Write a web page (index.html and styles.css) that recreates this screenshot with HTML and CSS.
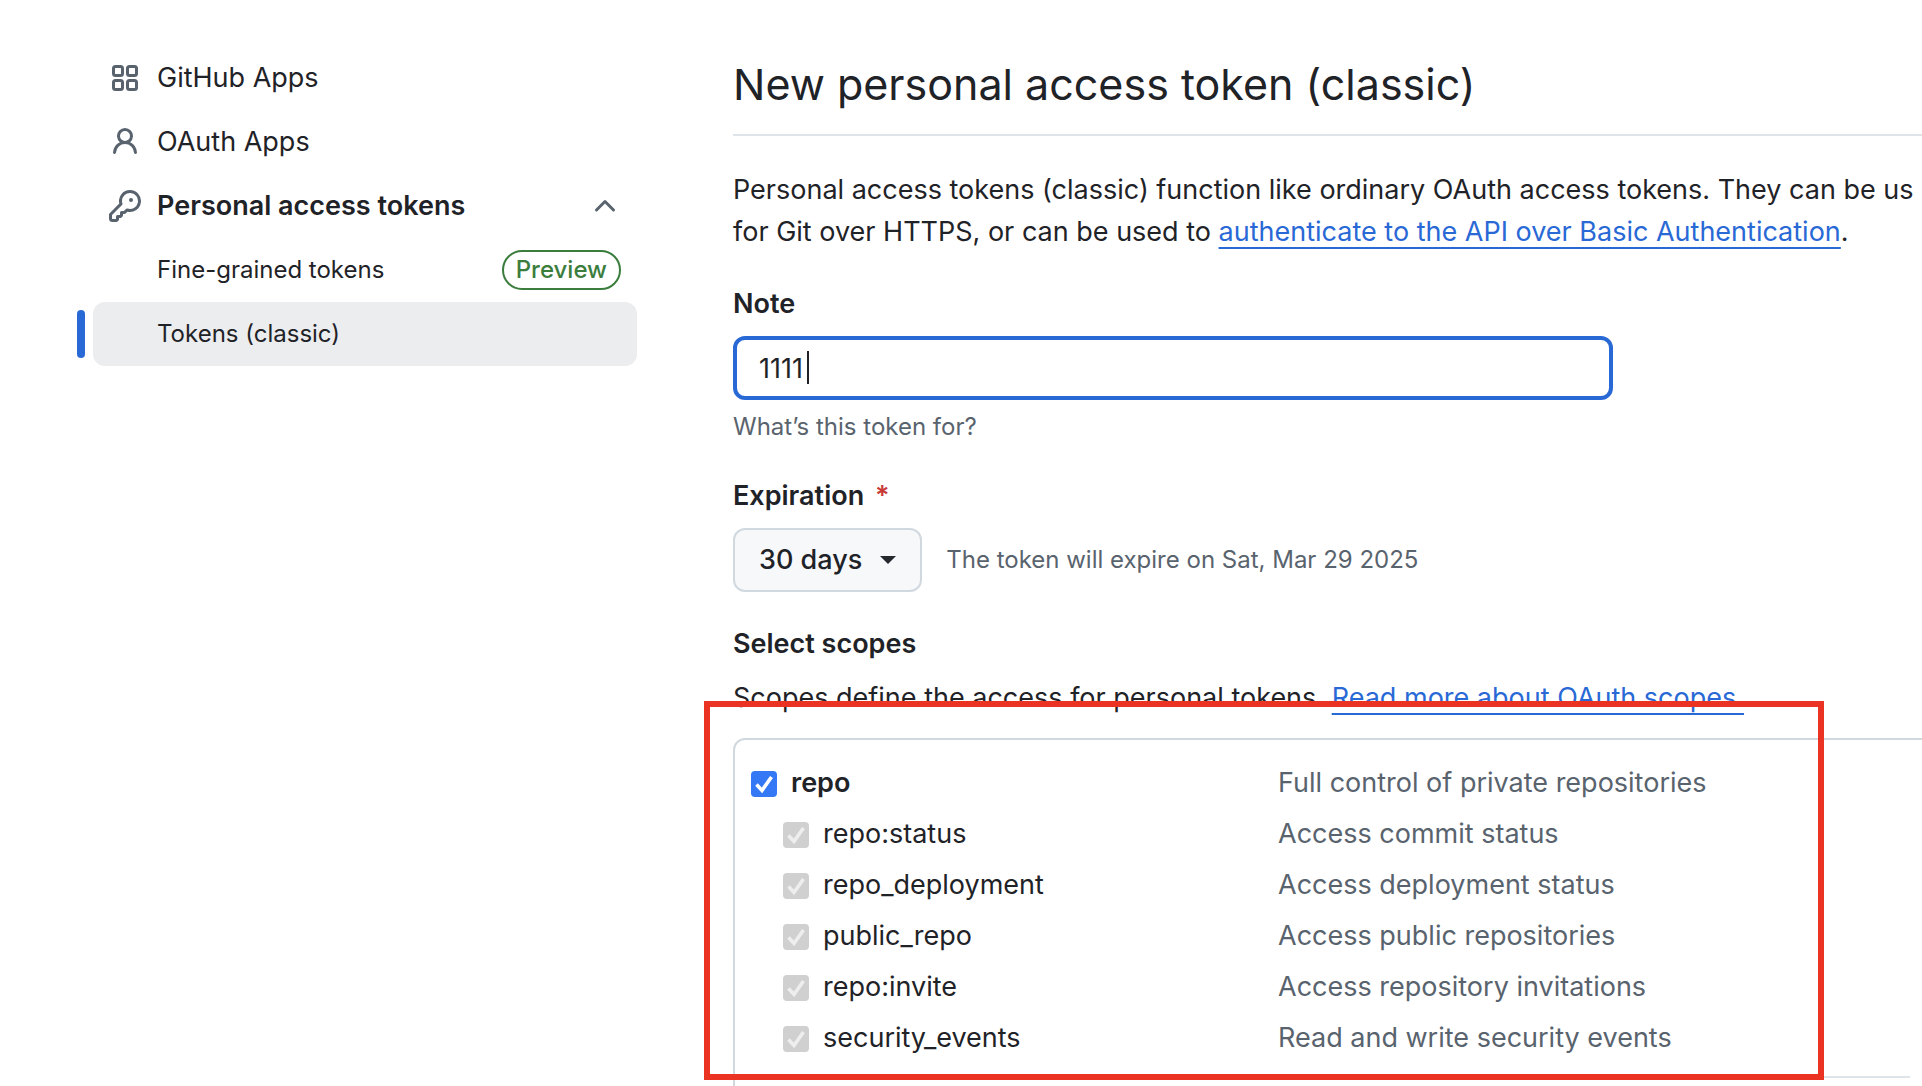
FILE: index.html
```html
<!DOCTYPE html>
<html lang="en">
	<head>
		<meta charset="utf-8">
		<title>New personal access token (classic)</title>
		<link rel="stylesheet" href="styles.css">
	</head>
	<body>
		<div class="page">
			<nav class="sidebar">
				<ul class="navList">
					<li>
						<a href="#" class="navItem">
							<svg class="icon" viewBox="0 0 16 16">
								<g fill="none" stroke="currentColor" stroke-width="1.5">
									<rect x="2.25" y="2.25" width="4.5" height="4.5" rx="1"/>
									<rect x="9.25" y="2.25" width="4.5" height="4.5" rx="1"/>
									<rect x="2.25" y="9.25" width="4.5" height="4.5" rx="1"/>
									<rect x="9.25" y="9.25" width="4.5" height="4.5" rx="1"/>
								</g>
							</svg>
							<span>GitHub Apps</span>
						</a>
					</li>
					<li>
						<a href="#" class="navItem">
							<svg class="icon" viewBox="0 0 16 16"><path d="M10.561 8.073a6.005 6.005 0 0 1 3.432 5.142.75.75 0 1 1-1.498.07 4.5 4.5 0 0 0-8.99 0 .75.75 0 0 1-1.498-.07 6.004 6.004 0 0 1 3.431-5.142 3.999 3.999 0 1 1 5.123 0ZM10.5 5a2.5 2.5 0 1 0-5 0 2.5 2.5 0 0 0 5 0Z"/></svg>
							<span>OAuth Apps</span>
						</a>
					</li>
					<li>
						<button type="button" class="navItem parent" aria-expanded="true">
							<svg class="icon" viewBox="0 0 16 16"><path d="M10.5 0a5.499 5.499 0 1 1-1.288 10.848l-.932.932a.749.749 0 0 1-.53.22H7v.75a.749.749 0 0 1-.22.53l-.5.5a.749.749 0 0 1-.53.22H5v.75a.749.749 0 0 1-.22.53l-.5.5a.749.749 0 0 1-.53.22h-2A1.75 1.75 0 0 1 0 14.25v-2c0-.199.079-.389.22-.53l4.932-4.932A5.5 5.5 0 0 1 10.5 0Zm-4 5.5c-.001.431.069.86.205 1.269a.75.75 0 0 1-.181.768L1.5 12.56v1.69c0 .138.112.25.25.25h1.69l.06-.06v-1.19a.75.75 0 0 1 .75-.75h1.19l.06-.06v-1.19a.75.75 0 0 1 .75-.75h1.19l1.023-1.025a.75.75 0 0 1 .768-.18A4 4 0 1 0 6.5 5.5ZM11 6a1 1 0 1 1 0-2 1 1 0 0 1 0 2Z"/></svg>
							<span>Personal access tokens</span>
							<svg class="icon chevron" viewBox="0 0 16 16"><path d="M3.22 10.53a.749.749 0 0 1 0-1.06l4.25-4.25a.749.749 0 0 1 1.06 0l4.25 4.25a.749.749 0 1 1-1.06 1.06L8 6.811 4.28 10.53a.749.749 0 0 1-1.06 0Z"/></svg>
						</button>
						<ul class="subList">
							<li>
								<a href="#" class="navItem subItem">
									<span>Fine-grained tokens</span>
									<span class="badge">Preview</span>
								</a>
							</li>
							<li>
								<a href="#" class="navItem subItem current" aria-current="page">
									<span>Tokens (classic)</span>
								</a>
							</li>
						</ul>
					</li>
				</ul>
			</nav>

			<main class="content">
				<h1>New personal access token (classic)</h1>
				<p class="intro">Personal access tokens (classic) function like ordinary OAuth access tokens. They can be us<br>
				for Git over HTTPS, or can be used to <a href="#">authenticate to the API over Basic Authentication</a>.</p>

				<form>
					<div class="field">
						<label for="note">Note</label>
						<div class="inputWrap">
							<input type="text" id="note" class="textInput" value="1111">
							<span class="cursor"></span>
						</div>
						<p class="hint">What’s this token for?</p>
					</div>

					<div class="field">
						<label for="expiration">Expiration <span class="required">*</span></label>
						<div class="expiration">
							<button type="button" id="expiration" class="dropdown">30 days<span class="caret"></span></button>
							<span class="hint">The token will expire on Sat, Mar 29 2025</span>
						</div>
					</div>

					<h2>Select scopes</h2>
					<p class="scopesText">Scopes define the access for personal tokens. <a href="#">Read more about OAuth scopes.</a></p>

					<div class="scopesWrap">
						<div class="scopes">
							<ul class="scopeGroup">
								<li class="scope top">
									<label><input type="checkbox" checked>repo</label>
									<span>Full control of private repositories</span>
								</li>
								<li class="scope">
									<label><input type="checkbox" checked disabled>repo:status</label>
									<span>Access commit status</span>
								</li>
								<li class="scope">
									<label><input type="checkbox" checked disabled>repo_deployment</label>
									<span>Access deployment status</span>
								</li>
								<li class="scope">
									<label><input type="checkbox" checked disabled>public_repo</label>
									<span>Access public repositories</span>
								</li>
								<li class="scope">
									<label><input type="checkbox" checked disabled>repo:invite</label>
									<span>Access repository invitations</span>
								</li>
								<li class="scope">
									<label><input type="checkbox" checked disabled>security_events</label>
									<span>Read and write security events</span>
								</li>
							</ul>
						</div>
						<div class="highlight"></div>
					</div>
				</form>
			</main>
		</div>
	</body>
</html>
```
FILE: styles.css
```css
*{
	box-sizing: border-box;
	padding: 0;
	margin: 0;
}
ul,li{
	list-style: none;
}
body{
	overflow: hidden;
	font-family: Inter, "Liberation Sans", sans-serif;
	font-size: 27px;
	line-height: 42px;
	color: #1f2328;
	background-color: #fff;
}
button,input{
	font: inherit;
	color: inherit;
}
a{
	color: #2969d6;
	text-decoration: none;
}
.page{
	display: flex;
	gap: 96px;
	/* the content runs on past the right edge of the window */
	width: calc(100% + 60px);
	padding: 46px 0 0 93px;
}

/* sidebar */
.sidebar{
	flex: none;
	width: 544px;
}
.navItem{
	position: relative;
	display: flex;
	align-items: center;
	gap: 16px;
	width: 100%;
	height: 64px;
	padding: 0 16px;
	border: 0;
	border-radius: 12px;
	background-color: transparent;
	color: #1f2328;
	text-align: left;
}
.parent{
	font-weight: 600;
}
.icon{
	flex: none;
	width: 32px;
	height: 32px;
	fill: #59636e;
	color: #59636e;
}
.chevron{
	margin-left: auto;
}
.subItem{
	justify-content: space-between;
	padding-left: 64px;
	font-size: 24px;
}
.badge{
	height: 40px;
	padding: 0 12px;
	border: 2px solid #3a7d3c;
	border-radius: 20px;
	font-weight: 500;
	line-height: 36px;
	color: #3a7d3c;
}
.current{
	background-color: #ecedef;
}
.current::before{
	content: "";
	position: absolute;
	left: -16px;
	top: 8px;
	width: 8px;
	height: 48px;
	border-radius: 6px;
	background-color: #2969d6;
}

/* main */
.content{
	flex: 1;
	min-width: 0;
}
h1{
	height: 90px;
	padding-top: 2px;
	border-bottom: 2px solid #dfe4e9;
	font-size: 43px;
	font-weight: 400;
	line-height: 72px;
}
.intro{
	margin: 33px 0 30px;
	white-space: nowrap;
}
.intro a,.scopesText a{
	text-decoration: underline;
	text-decoration-thickness: 2px;
	text-underline-offset: 6px;
}
.field{
	margin-bottom: 27px;
}
.field label{
	display: block;
	margin-bottom: 11px;
	font-weight: 600;
}
h2{
	margin: 31px 0 12px;
	font-size: 27px;
	font-weight: 600;
}
.required{
	margin-left: 4px;
	color: #c93a37;
}
.inputWrap{
	position: relative;
	width: 880px;
	max-width: 100%;
}
.textInput{
	display: block;
	width: 100%;
	height: 64px;
	padding: 0 22px;
	border: 4px solid #2969d6;
	border-radius: 12px;
	outline: none;
	background-color: #fff;
}
/* text cursor after the value */
.cursor{
	position: absolute;
	top: 15px;
	left: 74px;
	width: 2px;
	height: 33px;
	background-color: #1f2328;
}
.hint{
	font-size: 24px;
	color: #59636e;
}
.field p.hint{
	margin-top: 6px;
}
.expiration{
	display: flex;
	align-items: center;
	gap: 24px;
}
.dropdown{
	display: flex;
	align-items: center;
	gap: 18px;
	height: 64px;
	padding: 0 24px;
	border: 2px solid #d1d9e0;
	border-radius: 12px;
	background-color: #f6f8fa;
	font-weight: 500;
}
.caret{
	border: 8px solid transparent;
	border-top-color: #25292e;
	border-bottom: 0;
}
.scopesText{
	margin-bottom: 19px;
}

/* scopes */
.scopesWrap{
	position: relative;
}
.scopes{
	height: 400px;
	padding: 17px 16px;
	border: 2px solid #d1d9e0;
	border-radius: 12px;
}
.scopeGroup{
	margin-right: 54px;
	padding-bottom: 13px;
	border-bottom: 2px solid #dfe4e9;
}
.scope{
	display: grid;
	grid-template-columns: 527px 1fr;
	align-items: center;
	height: 51px;
	color: #59636e;
}
.scope label{
	display: flex;
	align-items: center;
	gap: 14px;
	padding-left: 32px;
	color: #1f2328;
}
.scope.top label{
	padding-left: 0;
	font-weight: 600;
}
.scope input{
	appearance: none;
	width: 26px;
	height: 26px;
	margin-top: 3px;
	border-radius: 4px;
	background: #3478f6 url("data:image/svg+xml,%3Csvg xmlns='http://www.w3.org/2000/svg' viewBox='0 0 26 26'%3E%3Cpath d='M5.500 13.500l5.500 6L20.500 6' fill='none' stroke='%23fff' stroke-width='3.600'/%3E%3C/svg%3E");
}
.scope input:disabled{
	background-color: #d0d0d0;
	background-image: url("data:image/svg+xml,%3Csvg xmlns='http://www.w3.org/2000/svg' viewBox='0 0 26 26'%3E%3Cpath d='M5.500 13.500l5.500 6L20.500 6' fill='none' stroke='%23eee' stroke-width='3.600'/%3E%3C/svg%3E");
}
/* red frame drawn over the scopes */
.highlight{
	position: absolute;
	top: -37px;
	left: -29px;
	width: 1120px;
	height: 379px;
	border: 6px solid #eb3323;
}
```
